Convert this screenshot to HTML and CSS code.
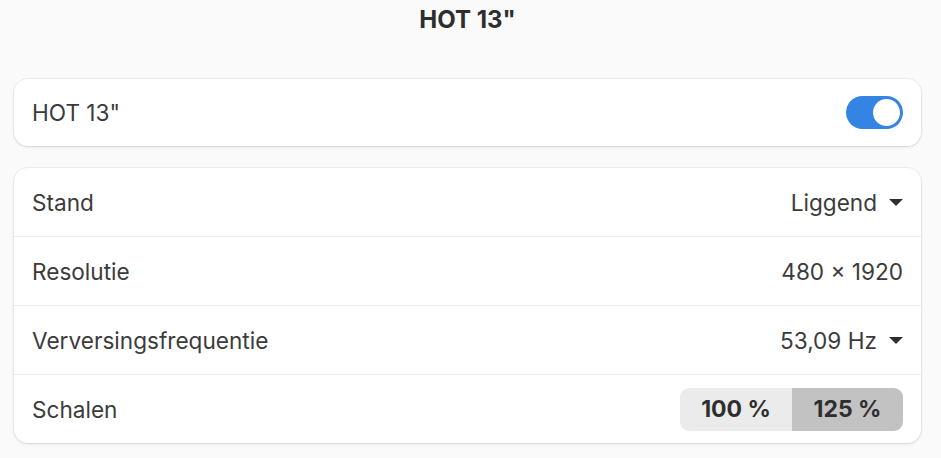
FILE: index.html
```html
<!DOCTYPE html>
<html lang="nl">
<head>
    <meta charset="UTF-8">
    <title>HOT 13"</title>
    <link rel="stylesheet" href="styles.css">
</head>
<body>
    <div class="page">
        <h1 class="title">HOT 13"</h1>

        <div class="card">
            <div class="row">
                <span>HOT 13"</span>
                <div class="switch on"><span class="knob"></span></div>
            </div>
        </div>

        <div class="card">
            <div class="row">
                <span>Stand</span>
                <span class="value">Liggend <span class="arrow"></span></span>
            </div>
            <div class="row">
                <span>Resolutie</span>
                <span class="value">480 × 1920</span>
            </div>
            <div class="row">
                <span>Verversingsfrequentie</span>
                <span class="value">53,09 Hz <span class="arrow"></span></span>
            </div>
            <div class="row">
                <span>Schalen</span>
                <div class="toggle-group">
                    <button class="seg">100 %</button>
                    <button class="seg active">125 %</button>
                </div>
            </div>
        </div>
    </div>
</body>
</html>
```

FILE: styles.css
```css
body {
    margin: 0;
    background: #fafafa;
    font-family: Inter, "Noto Sans", sans-serif;
    font-size: 22.6px;
    color: #3b3b3b;
}
.page {
    padding: 0 20px 0 14px;
}
.title {
    margin: 0;
    height: 79px;
    padding-top: 5px;
    box-sizing: border-box;
    text-align: center;
    font-size: 24px;
    font-weight: 700;
    color: #2e2e2e;
}
.card {
    background: #fff;
    border-radius: 14px;
    box-shadow: 0 0 0 1px rgba(0, 0, 0, 0.04), 0 1px 3px rgba(0, 0, 0, 0.12);
    margin-bottom: 22px;
}
.row {
    display: flex;
    align-items: center;
    justify-content: space-between;
    height: 68px;
    padding: 0 18px 0 18px;
    border-top: 1px solid #ececec;
}
.row:first-child {
    border-top: none;
}
.card:first-of-type .row {
    height: 67px;
}
.value {
    display: flex;
    align-items: center;
    gap: 12px;
}
.arrow {
    width: 0;
    height: 0;
    border-left: 7px solid transparent;
    border-right: 7px solid transparent;
    border-top: 7px solid #2e2e2e;
}
.switch {
    width: 57px;
    height: 33px;
    border-radius: 17px;
    background: #3584e4;
    display: flex;
    align-items: center;
    justify-content: flex-end;
    padding: 0 3px;
    box-sizing: border-box;
}
.knob {
    width: 27px;
    height: 27px;
    border-radius: 50%;
    background: #fff;
}
.toggle-group {
    display: flex;
    border-radius: 9px;
    overflow: hidden;
}
.seg {
    border: none;
    font-family: inherit;
    font-size: 23px;
    font-weight: 700;
    color: #2e2e2e;
    background: #ebebeb;
    width: 112px;
    height: 43px;
    padding: 0;
}
.seg.active {
    background: #c2c2c2;
    width: 111px;
}
```
